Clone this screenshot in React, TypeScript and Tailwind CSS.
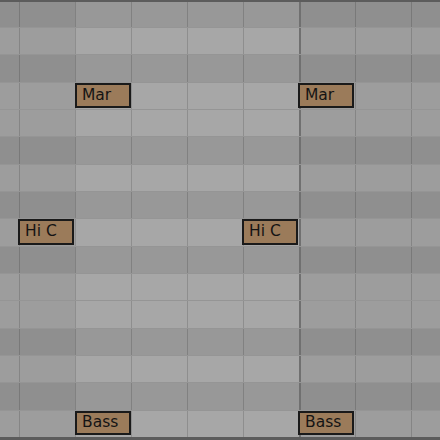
import React from "react";

// piano-roll style lane grid; dark rows = black keys
const ROWS = [1, 0, 1, 0, 0, 1, 0, 1, 0, 1, 0, 0, 1, 0, 1, 0];
const COLS = [
  { start: 0, width: 19 },
  { start: 19, width: 56 },
  { start: 75, width: 56 },
  { start: 131, width: 56 },
  { start: 187, width: 56 },
  { start: 243, width: 56 },
  { start: 299, width: 56 },
  { start: 355, width: 56 },
  { start: 411, width: 29 },
];

const NOTES = [
  { row: 3, col: 2, label: "Mar", left: "-left-px" },
  { row: 3, col: 6, label: "Mar", left: "-left-[3px]" },
  { row: 8, col: 1, label: "Hi C", left: "-left-[2px]" },
  { row: 8, col: 5, label: "Hi C", left: "-left-[2px]" },
  { row: 15, col: 2, label: "Bass", left: "-left-px" },
  { row: 15, col: 6, label: "Bass", left: "-left-[3px]" },
];

function Note({ label, left, last }: { label: string; left: string; last: boolean }) {
  return (
    <div
      className={`absolute top-0 ${last ? "bottom-[2px]" : "bottom-[1px]"} ${left} w-[56px] z-10 flex items-center bg-[#9b7b5a] border-2 border-[#1a1a1a] pl-[5px] text-[15.5px] leading-none text-[#141414]`}
      style={{ fontFamily: '"DejaVu Sans", Verdana, sans-serif' }}
    >
      {label}
    </div>
  );
}

function Cell({ row, col }: { row: number; col: number }) {
  const c = COLS[col];
  const black = ROWS[row] === 1;
  const lightBar = c.start >= 75 && c.start < 299;
  const bg = lightBar
    ? black
      ? "bg-[#989898]"
      : "bg-[#a7a7a7]"
    : black
      ? "bg-[#8f8f8f]"
      : "bg-[#9d9d9d]";
  const line =
    c.start === 0
      ? ""
      : c.start === 299
        ? "border-l-2 border-[#707070]"
        : "border-l border-black/15";
  const note = NOTES.find((n) => n.row === row && n.col === col);
  return (
    <div className={`relative h-full shrink-0 ${bg} ${line}`} style={{ width: c.width }}>
      {note && <Note label={note.label} left={note.left} last={row === ROWS.length - 1} />}
    </div>
  );
}

export default function App() {
  return (
    <div className="w-[440px] h-[440px] overflow-hidden flex flex-col bg-[#9d9d9d] border-t-2 border-b-[3px] border-[#5c5c5c]">
      {ROWS.map((_, r) => (
        <div
          key={r}
          className={`flex ${r === 0 ? "h-[25px] shrink-0" : "flex-1 min-h-0 border-t border-black/5"}`}
        >
          {COLS.map((_, c) => (
            <Cell key={c} row={r} col={c} />
          ))}
        </div>
      ))}
    </div>
  );
}
